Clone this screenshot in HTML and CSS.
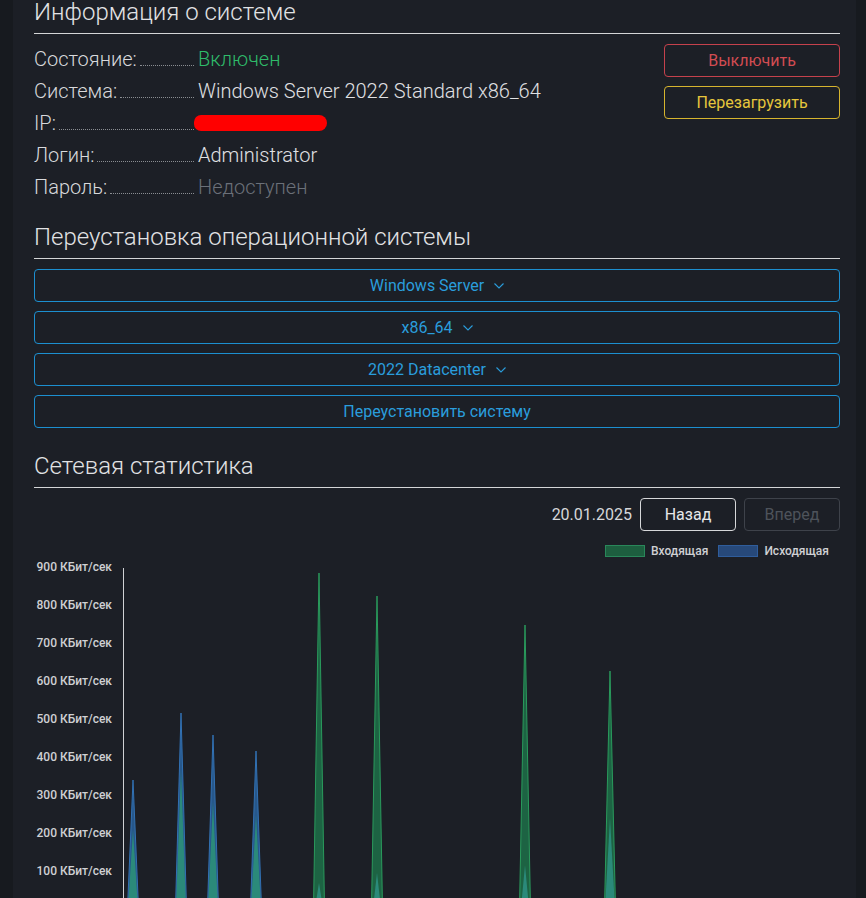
FILE: index.html
```html
<!DOCTYPE html>
<html lang="ru">
<head>
<meta charset="utf-8">
<title>Информация о системе</title>
<link rel="stylesheet" href="styles.css">
</head>
<body>
<div class="page">
  <div class="card">
    <section class="sec sec-info">
      <h2 class="sec-title">Информация о системе</h2>
      <div class="info">
        <div class="rows">
          <div class="row"><div class="key"><span class="lbl">Состояние:</span><span class="dots"></span></div><span class="val val-on">Включен</span></div>
          <div class="row"><div class="key"><span class="lbl">Система:</span><span class="dots"></span></div><span class="val">Windows Server 2022 Standard x86_64</span></div>
          <div class="row"><div class="key"><span class="lbl">IP:</span><span class="dots"></span></div><span class="val"><span class="redact"></span></span></div>
          <div class="row"><div class="key"><span class="lbl">Логин:</span><span class="dots"></span></div><span class="val">Administrator</span></div>
          <div class="row"><div class="key"><span class="lbl">Пароль:</span><span class="dots"></span></div><span class="val val-off">Недоступен</span></div>
        </div>
        <div class="actions">
          <button class="btn btn-danger">Выключить</button>
          <button class="btn btn-warn">Перезагрузить</button>
        </div>
      </div>
    </section>

    <section class="sec sec-os">
      <h2 class="sec-title">Переустановка операционной системы</h2>
      <div class="os-list">
        <button class="btn btn-os">Windows Server <svg class="chev" width="10" height="6" viewBox="0 0 10 6"><polyline points="0.5,0.5 5,5 9.5,0.5" fill="none" stroke="currentColor" stroke-width="1.1"/></svg></button>
        <button class="btn btn-os">x86_64 <svg class="chev" width="10" height="6" viewBox="0 0 10 6"><polyline points="0.5,0.5 5,5 9.5,0.5" fill="none" stroke="currentColor" stroke-width="1.1"/></svg></button>
        <button class="btn btn-os">2022 Datacenter <svg class="chev" width="10" height="6" viewBox="0 0 10 6"><polyline points="0.5,0.5 5,5 9.5,0.5" fill="none" stroke="currentColor" stroke-width="1.1"/></svg></button>
        <button class="btn btn-os">Переустановить систему</button>
      </div>
    </section>

    <section class="sec sec-net">
      <h2 class="sec-title">Сетевая статистика</h2>
      <div class="nav">
        <span class="date">20.01.2025</span>
        <button class="btn btn-nav">Назад</button>
        <button class="btn btn-nav btn-disabled">Вперед</button>
      </div>
      <div class="legend">
        <span class="swatch swatch-in"></span><span class="leg-text">Входящая</span>
        <span class="swatch swatch-out"></span><span class="leg-text">Исходящая</span>
      </div>
      <svg class="chart" width="806" height="350" viewBox="0 0 806 350">
        <g class="ylabels" text-anchor="end">
          <text x="78" y="11">900 КБит/сек</text>
          <text x="78" y="49">800 КБит/сек</text>
          <text x="78" y="87">700 КБит/сек</text>
          <text x="78" y="125">600 КБит/сек</text>
          <text x="78" y="163">500 КБит/сек</text>
          <text x="78" y="201">400 КБит/сек</text>
          <text x="78" y="239">300 КБит/сек</text>
          <text x="78" y="277">200 КБит/сек</text>
          <text x="78" y="315">100 КБит/сек</text>
        </g>
        <line x1="89.5" y1="8" x2="89.5" y2="350" stroke="#cfd1d4" stroke-width="1"/>
        <g class="out" fill="#27578a" stroke="#3271b3" stroke-width="1">
          <polygon points="93.5,348 99,220 104.5,348"/>
          <polygon points="141.5,348 147,153 152.5,348"/>
          <polygon points="173.5,348 179,175 184.5,348"/>
          <polygon points="216.5,348 222,191 227.5,348"/>
        </g>
        <g class="in" fill="#1d6343" stroke="#2a9a5c" stroke-width="1">
          <polygon points="279.5,348 285,13 290.5,348"/>
          <polygon points="337.5,348 343,36 348.5,348"/>
          <polygon points="485.5,348 491,65 496.5,348"/>
          <polygon points="570.5,348 576,111 581.5,348"/>
        </g>
        <g class="both" fill="#2b8a7a">
          <polygon points="94,348 99,270 104,348"/>
          <polygon points="142,348 147,210 152,348"/>
          <polygon points="174,348 179,242 184,348"/>
          <polygon points="217,348 222,255 227,348"/>
          <polygon points="281,348 285,323 289,348"/>
          <polygon points="339,348 343,313 347,348"/>
          <polygon points="487,348 491,305 495,348"/>
          <polygon points="571,348 576,258 581,348"/>
        </g>
      </svg>
    </section>
  </div>
</div>
</body>
</html>
```

FILE: styles.css
```css
* { box-sizing: border-box; }

html, body {
  margin: 0;
  padding: 0;
  background: #171a1f;
}

body {
  font-family: Roboto, "Liberation Sans", Arial, sans-serif;
  color: #d9dadc;
}

.page {
  display: flex;
  padding-left: 13px;
  height: 898px;
  overflow: hidden;
}

.card {
  width: 843px;
  background: #1c1f26;
  padding: 0 16px 0 21px;
}

.sec-title {
  margin: 0;
  font-size: 24px;
  font-weight: 300;
  line-height: 28px;
  color: #e2e3e5;
  padding-bottom: 7px;
  border-bottom: 1px solid #d4d5d7;
}

.sec-info { margin-top: -2px; }
.sec-os { margin-top: 20px; }
.sec-net { margin-top: 24px; }

.info {
  display: flex;
  margin-top: 9px;
}

.rows {
  flex: 1;
}

.row {
  display: flex;
  align-items: baseline;
  height: 32px;
  line-height: 32px;
  font-size: 20px;
  font-weight: 300;
}

.key {
  display: flex;
  align-items: baseline;
  width: 160px;
  flex: none;
}

.lbl { color: #d8d9dc; }

.dots {
  flex: 1;
  margin-left: 3px;
  border-bottom: 1px dotted #8a8d92;
}

.val {
  margin-left: 4px;
  color: #e0e1e4;
}

.val-on { color: #2fbb6a; }
.val-off { color: #6b7079; }

.redact {
  display: inline-block;
  width: 133px;
  height: 16px;
  background: #ff0000;
  border-radius: 8px 9px 9px 8px;
  vertical-align: -1px;
  margin-left: -4px;
}

.actions {
  width: 176px;
  flex: none;
  display: flex;
  flex-direction: column;
  gap: 9px;
  margin-top: 1px;
}

.btn {
  display: block;
  height: 33px;
  padding: 0 12px;
  border: 1px solid #ccc;
  border-radius: 4px;
  background: transparent;
  font-family: Roboto, "Liberation Sans", Arial, sans-serif;
  font-size: 16px;
  font-weight: 400;
  line-height: 31px;
  text-align: center;
  color: #ddd;
}

.btn-danger { border-color: #c5414c; color: #d24c52; }
.btn-warn { border-color: #d6b42e; color: #e6c63c; }

.os-list {
  display: flex;
  flex-direction: column;
  gap: 9px;
  margin-top: 10px;
}

.btn-os {
  width: 100%;
  border-color: #1c8fd0;
  color: #2a9ddc;
}

.chev {
  margin-left: 6px;
  vertical-align: 2px;
}

.nav {
  display: flex;
  justify-content: flex-end;
  align-items: center;
  gap: 8px;
  margin-top: 10px;
}

.date {
  font-size: 16px;
  color: #d6d7da;
}

.btn-nav {
  width: 96px;
  border-color: #d6d7d9;
  color: #e6e7e9;
}

.btn-disabled {
  border-color: #3e424a;
  color: #4e535b;
}

.legend {
  display: flex;
  justify-content: flex-end;
  align-items: center;
  gap: 6px;
  margin-top: 14px;
  padding-right: 11px;
  height: 12px;
  font-size: 12px;
  font-weight: 500;
  color: #cfd0d3;
}

.swatch {
  width: 40px;
  height: 12px;
  border: 1px solid;
}

.swatch-in { background: #1d5e3f; border-color: #29875a; }
.swatch-out { background: #27497a; border-color: #2f5d9c; margin-left: 4px; }

.chart {
  display: block;
  margin-top: 3px;
}

.ylabels {
  font-family: Roboto, "Liberation Sans", Arial, sans-serif;
  font-size: 12px;
  font-weight: 500;
  fill: #cfd0d3;
}
```
